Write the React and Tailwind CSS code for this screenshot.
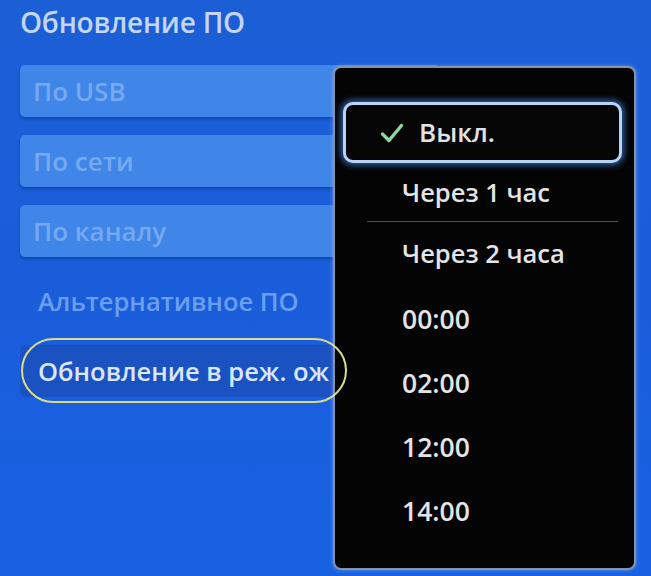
import React from "react";

const font = { fontFamily: '"Open Sans", "Noto Sans", sans-serif' };

function Check() {
  return (
    <svg width="24" height="22" viewBox="0 0 24 22" className="shrink-0">
      <path d="M2.5 12 L9 18.5 L21.5 3.5" fill="none" stroke="#8fd6a2" strokeWidth="3.4" strokeLinecap="round" strokeLinejoin="round" />
    </svg>
  );
}

export default function App() {
  const times = ["00:00", "02:00", "12:00", "14:00"];
  return (
    <div
      className="relative w-[651px] h-[576px] overflow-hidden bg-gradient-to-b from-[#1b5fd6] via-[#1a5ddb] to-[#1761e2]"
      style={font}
    >
      {/* Left menu */}
      <div className="flex flex-col pl-[20px]">
        <div className="h-[46px] pt-[5px] text-[28px] leading-[34px] font-semibold text-[#c4d6f2] tracking-[-0.2px]">
          Обновление ПО
        </div>
        <div className="flex flex-col gap-[18px] mt-[19px]">
          {["По USB", "По сети", "По каналу"].map((t) => (
            <div
              key={t}
              className="h-[52px] w-[420px] rounded-[5px] bg-[#3f86e8] shadow-[0_2px_3px_rgba(10,40,120,0.45)] flex items-center pl-[13px] text-[26px] font-semibold text-[#76aaf0]"
            >
              {t}
            </div>
          ))}
          <div className="h-[52px] flex items-center pl-[18px] text-[25.5px] font-semibold text-[#6a9ff0]">
            Альтернативное ПО
          </div>
          <div className="h-[52px] w-[313px] overflow-hidden rounded-l-[6px] bg-[#1a52c2] flex items-center pl-[18px] text-[25.5px] font-semibold text-[#dbe6f8] whitespace-nowrap">
            Обновление в реж. ож
          </div>
        </div>
      </div>

      {/* Dropdown popup */}
      <div className="absolute left-[333px] top-[66px] w-[303px] h-[504px] rounded-[8px] border-2 border-[#8293ad] bg-[#040405] shadow-[0_0_4px_rgba(150,180,230,0.6)] pl-[8px] pr-[12px] pt-[34px] flex flex-col">
        <div className="h-[61px] rounded-[10px] border-[3px] border-[#b8d3f6] shadow-[0_0_6px_2px_rgba(70,140,235,0.7)] bg-[#070607] flex items-center pl-[34px] gap-[15px]">
          <Check />
          <span className="text-[26px] font-semibold text-[#e2e2e6]">Выкл.</span>
        </div>
        <div className="h-[58px] flex items-center pl-[59px] text-[25.5px] font-semibold text-[#e4e4e8]">
          Через 1 час
        </div>
        <div className="h-px ml-[24px] mr-[4px] bg-[#4a5060]" />
        <div className="h-[62px] flex items-center pl-[59px] text-[25.5px] font-semibold text-[#e4e4e8]">
          Через 2 часа
        </div>
        <div className="flex flex-col mt-[4px]">
          {times.map((t) => (
            <div key={t} className="h-[64px] flex items-center pl-[59px] text-[26.5px] font-semibold text-[#e4e4e8]">
              {t}
            </div>
          ))}
        </div>
      </div>

      {/* Yellow annotation oval */}
      <div className="absolute left-[21px] top-[338px] w-[326px] h-[65px] rounded-full border-2 border-[#d9dc8c] pointer-events-none" />
    </div>
  );
}
